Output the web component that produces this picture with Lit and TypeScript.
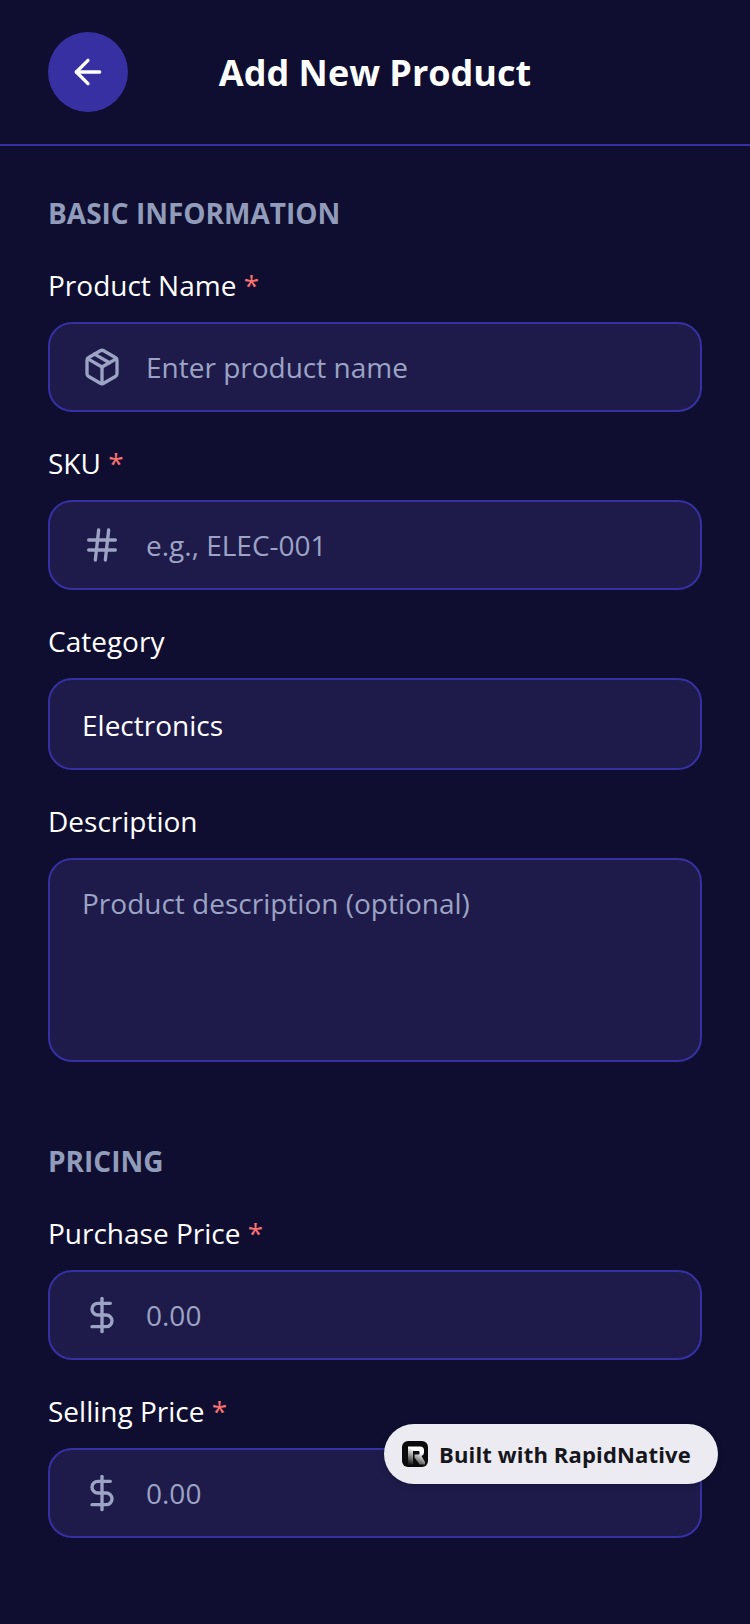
import {LitElement, html, css, svg} from 'lit';
import {customElement} from 'lit/decorators.js';

const icon = (body: unknown) => html`
  <svg class="icon" viewBox="0 0 24 24" fill="none" stroke="currentColor" stroke-width="2" stroke-linecap="round" stroke-linejoin="round">${body}</svg>
`;

const packageIcon = svg`
  <path d="m7.5 4.27 9 5.15"></path>
  <path d="M21 8a2 2 0 0 0-1-1.73l-7-4a2 2 0 0 0-2 0l-7 4A2 2 0 0 0 3 8v8a2 2 0 0 0 1 1.73l7 4a2 2 0 0 0 2 0l7-4A2 2 0 0 0 21 16Z"></path>
  <path d="m3.3 7 8.7 5 8.7-5"></path>
  <path d="M12 22V12"></path>
`;
const hashIcon = svg`
  <line x1="4" x2="20" y1="9" y2="9"></line>
  <line x1="4" x2="20" y1="15" y2="15"></line>
  <line x1="10" x2="8" y1="3" y2="21"></line>
  <line x1="16" x2="14" y1="3" y2="21"></line>
`;
const dollarIcon = svg`
  <line x1="12" x2="12" y1="2" y2="22"></line>
  <path d="M17 5H9.5a3.5 3.5 0 0 0 0 7h5a3.5 3.5 0 0 1 0 7H6"></path>
`;

@customElement('app-root')
class AppRoot extends LitElement {
  static styles = css`
    :host {
      display: block;
      position: relative;
      width: 750px;
      height: 1624px;
      overflow: hidden;
      background: #0f0e30;
      color: #ffffff;
      font-family: "Open Sans", sans-serif;
    }

    .header {
      display: flex;
      justify-content: space-between;
      align-items: center;
      height: 144px;
      padding: 0 48px;
      border-bottom: 2px solid #3730a3;
    }

    .back {
      display: flex;
      align-items: center;
      justify-content: center;
      width: 80px;
      height: 80px;
      border-radius: 50%;
      background: #3730a3;
      color: #ffffff;
    }

    .spacer {
      width: 80px;
    }

    .title {
      font-size: 36px;
      line-height: 48px;
      font-weight: 700;
      padding-top: 2px;
    }

    .content {
      padding: 47px 48px 0;
    }

    .section {
      margin-bottom: 79px;
    }

    .section-title {
      font-size: 28px;
      line-height: 40px;
      font-weight: 700;
      color: #919cbb;
      text-transform: uppercase;
      margin-bottom: 33px;
    }

    .field {
      margin-bottom: 32px;
    }

    .label {
      font-size: 28px;
      line-height: 38px;
      margin-bottom: 18px;
    }

    .required {
      color: #f87171;
    }

    .input {
      display: flex;
      align-items: center;
      gap: 24px;
      height: 90px;
      box-sizing: border-box;
      padding: 0 32px;
      background: #1e1b4b;
      border: 2px solid #3730a3;
      border-radius: 24px;
      font-size: 28px;
      color: #9ca3c4;
    }

    .input.value {
      height: 92px;
      padding-top: 2px;
      color: #ffffff;
    }

    .input.area {
      align-items: flex-start;
      height: 204px;
      padding-top: 23px;
      line-height: 40px;
    }

    .icon {
      width: 40px;
      height: 40px;
      flex: none;
    }

    .badge {
      position: absolute;
      left: 384px;
      top: 1424px;
      display: flex;
      align-items: center;
      gap: 11px;
      width: 334px;
      height: 60px;
      box-sizing: border-box;
      padding: 0 0 1px 18px;
      border-radius: 30px;
      background: #ebebf1;
      color: #16161c;
      font-size: 22px;
      font-weight: 700;
      letter-spacing: 0.15px;
      box-shadow: 0 2px 6px rgba(0, 0, 0, 0.2);
    }

    .logo {
      width: 26px;
      height: 26px;
      flex: none;
    }
  `;

  renderField(label: string, required: boolean, placeholder: string, glyph: unknown) {
    return html`
      <div class="field">
        <div class="label">${label}${required ? html` <span class="required">*</span>` : ''}</div>
        <div class="input">${icon(glyph)}<span>${placeholder}</span></div>
      </div>
    `;
  }

  render() {
    return html`
      <div class="header">
        <div class="back">
          ${icon(svg`<path d="m12 19-7-7 7-7"></path><path d="M19 12H5"></path>`)}
        </div>
        <div class="title">Add New Product</div>
        <div class="spacer"></div>
      </div>
      <div class="content">
        <div class="section">
          <div class="section-title">Basic Information</div>
          ${this.renderField('Product Name', true, 'Enter product name', packageIcon)}
          ${this.renderField('SKU', true, 'e.g., ELEC-001', hashIcon)}
          <div class="field">
            <div class="label">Category</div>
            <div class="input value"><span>Electronics</span></div>
          </div>
          <div class="field">
            <div class="label">Description</div>
            <div class="input area"><span>Product description (optional)</span></div>
          </div>
        </div>
        <div class="section">
          <div class="section-title">Pricing</div>
          ${this.renderField('Purchase Price', true, '0.00', dollarIcon)}
          ${this.renderField('Selling Price', true, '0.00', dollarIcon)}
        </div>
      </div>
      <div class="badge">
        <svg class="logo" viewBox="0 0 26 26">
          <defs>
            <linearGradient id="r" gradientUnits="userSpaceOnUse" x1="7" y1="22" x2="13" y2="9">
              <stop offset="0" stop-color="#222"></stop>
              <stop offset="1" stop-color="#fff"></stop>
            </linearGradient>
          </defs>
          <rect width="26" height="26" rx="6" fill="#0b0b0d"></rect>
          <path d="M6 5.5H18a4 4 0 0 1 4 4v2a4 4 0 0 1-2.5 3.5L23 21v2.5h-5.5L12.5 16.5V13.5h4a1 1 0 0 0 1-1v-1.5a1 1 0 0 0-1-1H11V23.5H6Z" fill="url(#r)"></path>
        </svg>
        <span>Built with RapidNative</span>
      </div>
    `;
  }
}
